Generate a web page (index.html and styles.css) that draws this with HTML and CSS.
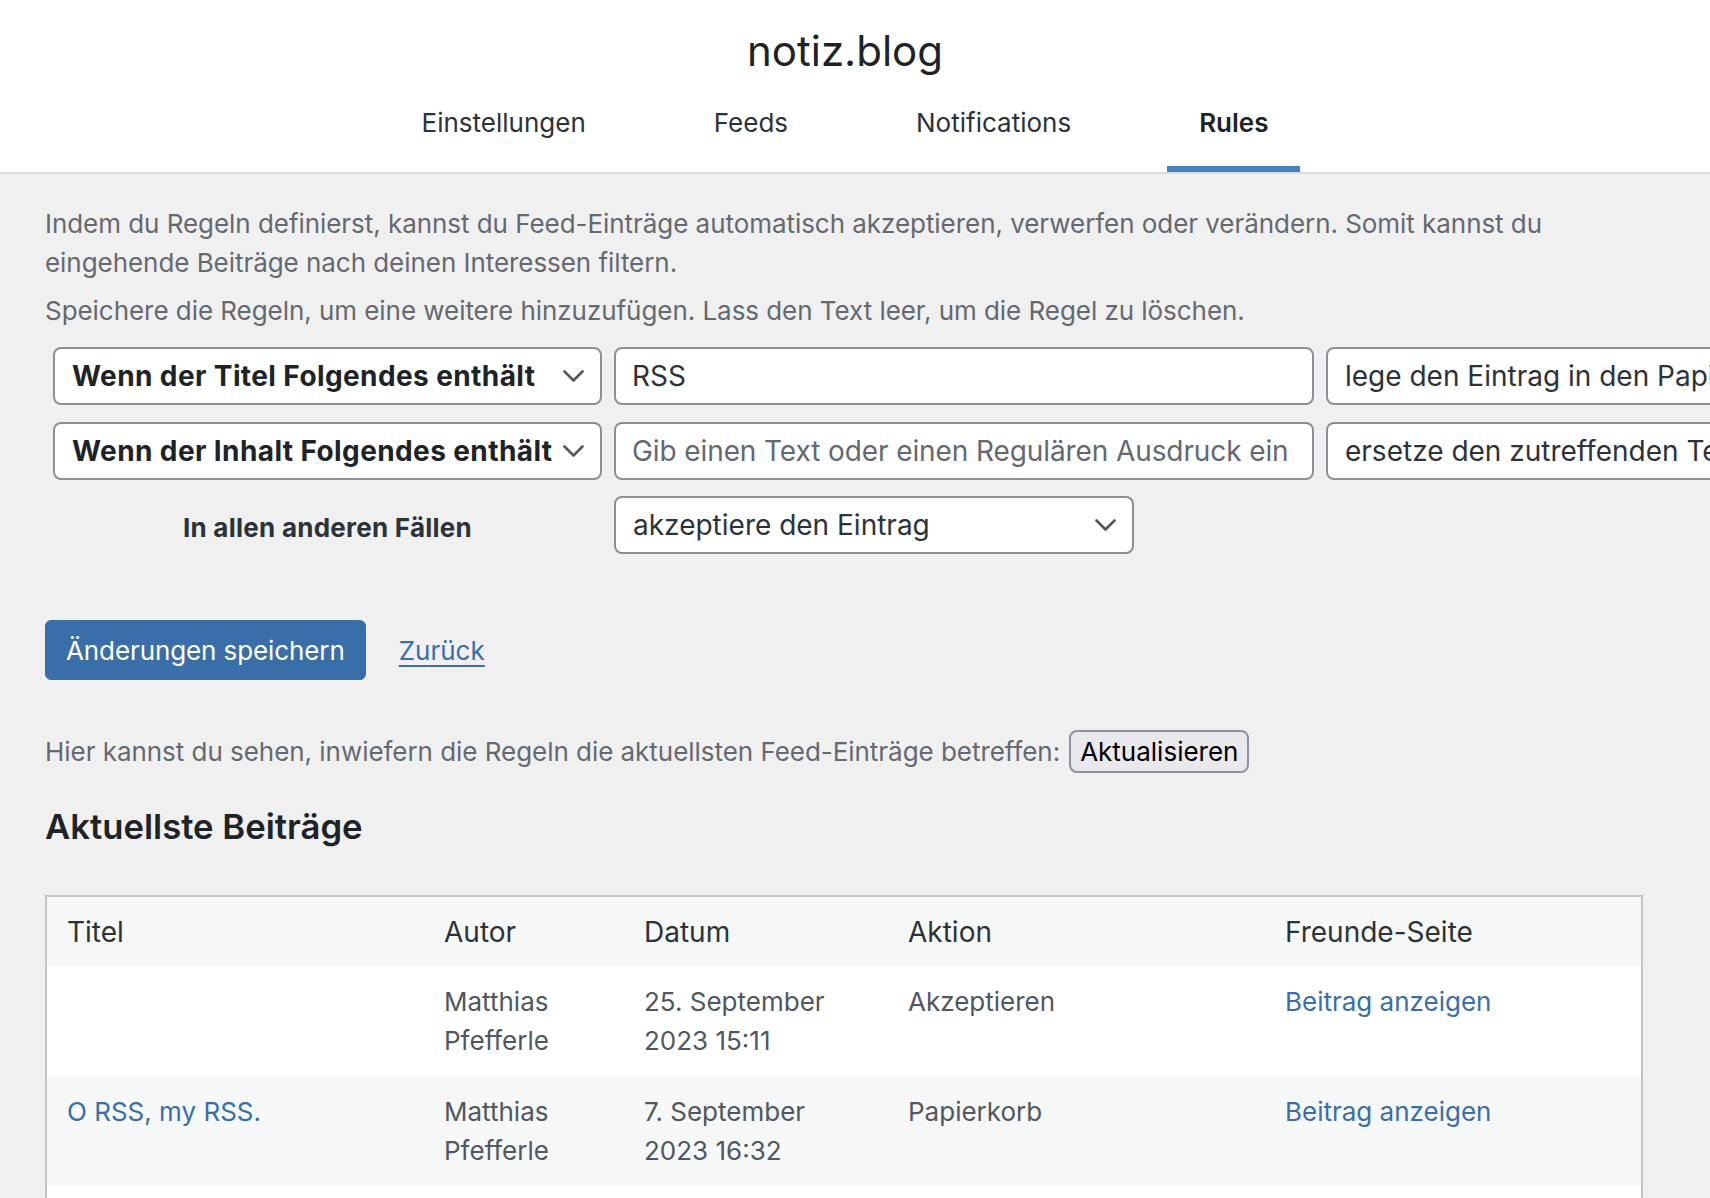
FILE: index.html
```html
<!DOCTYPE html>
<html lang="de">
<head>
<meta charset="utf-8">
<title>notiz.blog – Rules</title>
<link rel="stylesheet" href="styles.css">
</head>
<body>
<header class="site-header">
  <h1 class="site-title">notiz.blog</h1>
  <nav class="tabs">
    <a class="tab" href="#">Einstellungen</a>
    <a class="tab" href="#">Feeds</a>
    <a class="tab" href="#">Notifications</a>
    <a class="tab tab-active" href="#">Rules</a>
  </nav>
</header>

<main class="content">
  <p class="intro">Indem du Regeln definierst, kannst du Feed-Einträge automatisch akzeptieren, verwerfen oder verändern. Somit kannst du eingehende Beiträge nach deinen Interessen filtern.</p>
  <p class="intro intro-second">Speichere die Regeln, um eine weitere hinzuzufügen. Lass den Text leer, um die Regel zu löschen.</p>

  <div class="rules">
    <div class="select select-bold">
      <span class="select-text">Wenn der Titel Folgendes enthält</span>
      <svg class="chevron" viewBox="0 0 21 12" width="21" height="12"><polyline points="1.5,1.5 10.5,10.5 19.5,1.5" /></svg>
    </div>
    <div class="input"><span class="input-text">RSS</span></div>
    <div class="select select-wide">
      <span class="select-text">lege den Eintrag in den Papierkorb</span>
      <svg class="chevron" viewBox="0 0 21 12" width="21" height="12"><polyline points="1.5,1.5 10.5,10.5 19.5,1.5" /></svg>
    </div>

    <div class="select select-bold">
      <span class="select-text">Wenn der Inhalt Folgendes enthält</span>
      <svg class="chevron" viewBox="0 0 21 12" width="21" height="12"><polyline points="1.5,1.5 10.5,10.5 19.5,1.5" /></svg>
    </div>
    <div class="input"><span class="input-placeholder">Gib einen Text oder einen Regulären Ausdruck ein</span></div>
    <div class="select select-wide">
      <span class="select-text">ersetze den zutreffenden Text mit</span>
      <svg class="chevron" viewBox="0 0 21 12" width="21" height="12"><polyline points="1.5,1.5 10.5,10.5 19.5,1.5" /></svg>
    </div>

    <div class="rule-label">In allen anderen Fällen</div>
    <div class="select select-catchall">
      <span class="select-text">akzeptiere den Eintrag</span>
      <svg class="chevron" viewBox="0 0 21 12" width="21" height="12"><polyline points="1.5,1.5 10.5,10.5 19.5,1.5" /></svg>
    </div>
  </div>

  <div class="actions">
    <button class="btn-primary" type="button">Änderungen speichern</button>
    <a class="link-back" href="#">Zurück</a>
  </div>

  <p class="preview-line">
    <span>Hier kannst du sehen, inwiefern die Regeln die aktuellsten Feed-Einträge betreffen:</span>
    <button class="btn-native" type="button">Aktualisieren</button>
  </p>

  <h2 class="section-title">Aktuellste Beiträge</h2>

  <table class="posts">
    <thead>
      <tr>
        <th class="col-title">Titel</th>
        <th class="col-author">Autor</th>
        <th class="col-date">Datum</th>
        <th class="col-action">Aktion</th>
        <th class="col-page">Freunde-Seite</th>
      </tr>
    </thead>
    <tbody>
      <tr>
        <td></td>
        <td>Matthias<br>Pfefferle</td>
        <td>25. September<br>2023 15:11</td>
        <td>Akzeptieren</td>
        <td><a href="#">Beitrag anzeigen</a></td>
      </tr>
      <tr class="alt">
        <td><a href="#">O RSS, my RSS.</a></td>
        <td>Matthias<br>Pfefferle</td>
        <td>7. September<br>2023 16:32</td>
        <td>Papierkorb</td>
        <td><a href="#">Beitrag anzeigen</a></td>
      </tr>
      <tr>
        <td><a href="#">Feeds lesen</a></td>
        <td>Matthias<br>Pfefferle</td>
        <td>1. September<br>2023 09:12</td>
        <td>Akzeptieren</td>
        <td><a href="#">Beitrag anzeigen</a></td>
      </tr>
    </tbody>
  </table>
</main>
</body>
</html>
```

FILE: styles.css
```css
html {
  overflow-x: hidden;
  scrollbar-width: none;
}
html::-webkit-scrollbar { display: none; }

body {
  margin: 0;
  background: #f0f0f1;
  font-family: Inter, "Noto Sans", "Liberation Sans", sans-serif;
  color: #3c434a;
  overflow-x: hidden;
}

/* Header */
.site-header {
  background: #fff;
  border-bottom: 2px solid #dcdcde;
  display: flex;
  flex-direction: column;
  align-items: center;
  padding-right: 20px;
}
.site-title {
  margin: 0;
  padding-top: 23px;
  font-size: 42px;
  line-height: 56px;
  font-weight: 400;
  color: #1d2327;
}
.tabs {
  display: flex;
  gap: 64px;
  margin-top: 24px;
}
.tab {
  display: block;
  padding: 0 32px 24px;
  border-bottom: 6px solid transparent;
  font-size: 26px;
  line-height: 39px;
  color: #2c3338;
  text-decoration: none;
}
.tab-active {
  border-bottom-color: #4a7fc1;
  font-weight: 600;
  color: #1d2327;
}

/* Content */
.content {
  padding: 0 66px 40px 45px;
}
.intro {
  margin: 30px 0 0;
  font-size: 26px;
  line-height: 39px;
  letter-spacing: -0.05px;
  color: #646970;
}
.intro-second {
  margin-top: 9px;
}

.rules {
  display: grid;
  grid-template-columns: 549px 700px 520px;
  grid-auto-rows: 58px;
  column-gap: 12px;
  row-gap: 16.5px;
  margin: 17px 0 0 8px;
}
.select,
.input {
  box-sizing: border-box;
  height: 58px;
  border: 2px solid #8c8f94;
  border-radius: 8px;
  background: #fff;
  display: flex;
  align-items: center;
  font-size: 28px;
  color: #2c3338;
  white-space: nowrap;
  overflow: hidden;
}
.select {
  justify-content: space-between;
  padding: 0 16px 0 17px;
}
.input {
  padding: 0 16px;
}
.select-bold .select-text {
  font-weight: 700;
  letter-spacing: 0.4px;
  color: #1d2327;
}
.select-text {
  overflow: hidden;
}
.input-placeholder {
  color: #646970;
  letter-spacing: -0.1px;
}
.chevron {
  flex: none;
  margin-left: 8px;
  fill: none;
  stroke: #50575e;
  stroke-width: 2.6;
  stroke-linecap: round;
  stroke-linejoin: round;
}
.rule-label {
  align-self: center;
  text-align: center;
  font-size: 26px;
  font-weight: 700;
  letter-spacing: 0.25px;
  color: #2c3338;
  padding-top: 5px;
}
.select-catchall {
  width: 520px;
}

/* Actions */
.actions {
  display: flex;
  align-items: center;
  gap: 33px;
  margin-top: 66px;
}
.btn-primary {
  height: 60px;
  padding: 0 20px;
  border: 1px solid #3a6ea9;
  border-radius: 6px;
  background: #3a6ea9;
  color: #fff;
  font-family: inherit;
  font-size: 26px;
  letter-spacing: -0.1px;
}
.link-back {
  font-size: 26px;
  color: #3a6ea9;
  text-decoration: underline;
  text-decoration-thickness: 2px;
  text-underline-offset: 5px;
}

.preview-line {
  display: flex;
  align-items: center;
  gap: 9px;
  margin: 50px 0 0;
  font-size: 26px;
  letter-spacing: -0.04px;
  color: #646970;
}
.btn-native {
  height: 43px;
  padding: 0 9px;
  border: 2px solid #8f8f9d;
  border-radius: 8px;
  background: #e9e9ed;
  color: #000;
  font-family: inherit;
  font-size: 26px;
  letter-spacing: 0;
}

.section-title {
  margin: 31px 0 0;
  font-size: 34.7px;
  line-height: 44px;
  font-weight: 600;
  color: #1d2327;
}

/* Table */
.posts {
  margin-top: 47px;
  width: 1598px;
  border: 2px solid #c3c4c7;
  border-collapse: separate;
  border-spacing: 0;
  background: #fff;
  table-layout: fixed;
}
.posts th {
  background: #f6f7f7;
  text-align: left;
  font-weight: 400;
  font-size: 28px;
  line-height: 37px;
  padding: 17px 20px 15px;
  color: #2c3338;
}
.col-title { width: 337px; }
.col-author { width: 160px; }
.col-date { width: 224px; }
.col-action { width: 337px; }
.posts td {
  vertical-align: top;
  padding: 16px 20px;
  font-size: 26px;
  line-height: 39px;
  color: #50575e;
  height: 78px;
}
.posts tr.alt td {
  background: #f6f7f7;
}
.posts a {
  color: #3a6ea9;
  text-decoration: none;
}
```
